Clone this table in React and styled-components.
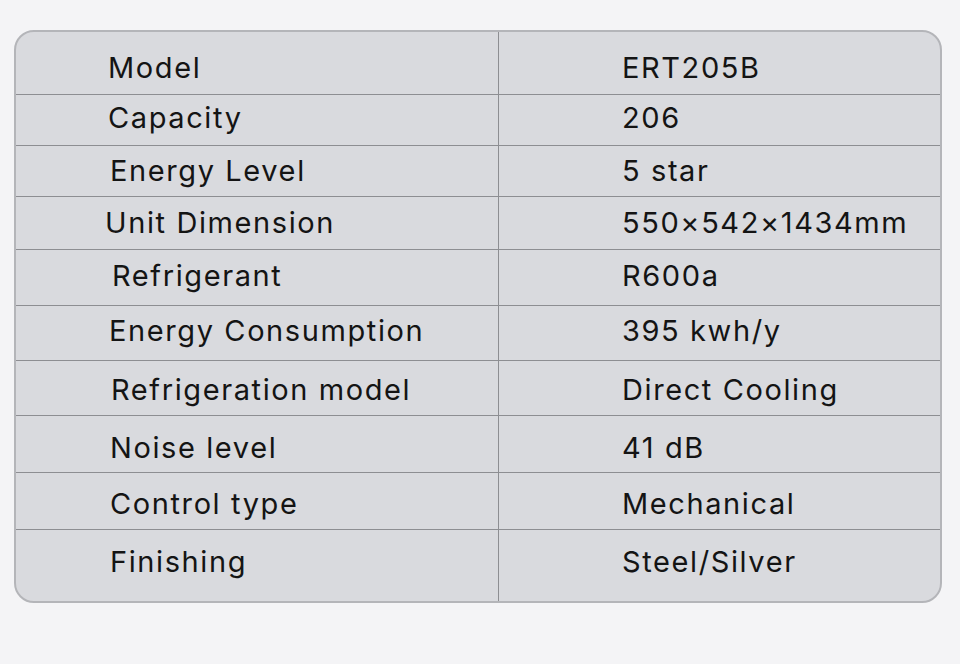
import styled, { createGlobalStyle } from 'styled-components';

const Global = createGlobalStyle`
  html, body { margin:0; padding:0; background:#f4f4f6; }
  #root { width:960px; height:664px; }
`;

const Page = styled.div`
  width:960px; height:664px; box-sizing:border-box;
  padding:30px 18px 0 14px;
  background:#f4f4f6;
  font-family:Inter, "Noto Sans", sans-serif;
`;

const Table = styled.div`
  background:#d9dade;
  border:2px solid #b4b5b9;
  border-radius:20px;
  overflow:hidden;
  box-sizing:border-box;
`;

const Row = styled.div`
  display:grid;
  grid-template-columns:483px 1fr;
  height:${p => p.$h}px;
  border-top:${p => (p.$first ? 'none' : '1px solid #8d8e92')};
  box-sizing:border-box;
`;

const Cell = styled.div`
  display:flex; align-items:center;
  padding-left:${p => p.$pl}px;
  padding-top:${p => Math.max(p.$dy, 0)}px;
  padding-bottom:${p => Math.max(-p.$dy, 0)}px;
  font-size:29px; color:#141414; letter-spacing:1.6px;
  white-space:nowrap;
  border-right:${p => (p.$left ? '1px solid #8d8e92' : 'none')};
  box-sizing:border-box;
`;

const ROWS = [
  { k:'Model', v:'ERT205B', h:62, dy:8, pl:92 },
  { k:'Capacity', v:'206', h:51, dy:-6, pl:92 },
  { k:'Energy Level', v:'5 star', h:51, dy:-2, pl:94 },
  { k:'Unit Dimension', v:'550×542×1434mm', h:53, dy:-2, pl:89 },
  { k:'Refrigerant', v:'R600a', h:56, dy:-4, pl:96 },
  { k:'Energy Consumption', v:'395 kwh/y', h:55, dy:-6, pl:93 },
  { k:'Refrigeration model', v:'Direct Cooling', h:55, dy:3, pl:95 },
  { k:'Noise level', v:'41 dB', h:57, dy:6, pl:94 },
  { k:'Control type', v:'Mechanical', h:57, dy:5, pl:94 },
  { k:'Finishing', v:'Steel/Silver', h:72, dy:-8, pl:94 },
];

export default function App() {
  return (
    <>
      <Global />
      <Page>
        <Table>
          {ROWS.map((r, i) => (
            <Row key={r.k} $h={r.h} $first={i === 0}>
              <Cell $left $pl={r.pl} $dy={r.dy}>{r.k}</Cell>
              <Cell $pl={123} $dy={r.dy}>{r.v}</Cell>
            </Row>
          ))}
        </Table>
      </Page>
    </>
  );
}
